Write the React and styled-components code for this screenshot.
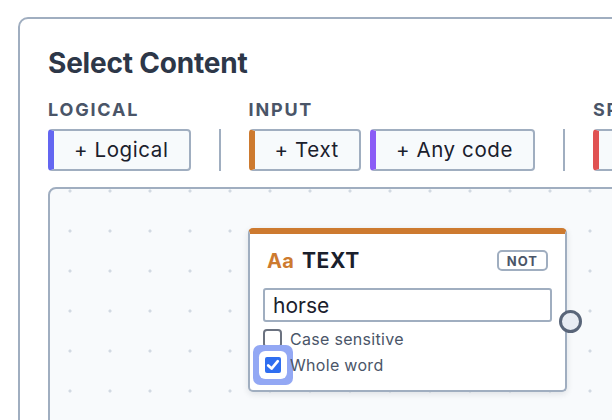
import React from "react";
import styled, { createGlobalStyle } from "styled-components";

const Global = createGlobalStyle`
  html, body { margin: 0; padding: 0; background: #ffffff; overflow: hidden; }
  body { font-family: Inter, "Noto Sans", sans-serif; -webkit-font-smoothing: antialiased; }
  * { box-sizing: border-box; }
`;

const Page = styled.div`
  width: 612px;
  height: 420px;
  overflow: hidden;
  padding: 17px 0 0 18px;
`;

const Panel = styled.div`
  width: 720px;
  height: 460px;
  border: 2px solid #a0aec0;
  border-radius: 10px;
  padding: 27px 0 0 28px;
  background: #ffffff;
`;

const Title = styled.h1`
  margin: 0;
  font-size: 28px;
  line-height: 35px;
  font-weight: 700;
  color: #2d3748;
  letter-spacing: -0.2px;
`;

const Palette = styled.div`
  display: flex;
  align-items: flex-end;
  gap: 28px;
  margin-top: 18px;
`;

const Group = styled.div`
  display: flex;
  flex-direction: column;
  gap: 7.5px;
`;

const GroupLabel = styled.div`
  font-size: 18px;
  line-height: 22px;
  font-weight: 700;
  letter-spacing: 1.8px;
  color: #4a5568;
`;

const Buttons = styled.div`
  display: flex;
  gap: 9px;
`;

const AddButton = styled.button`
  height: 42px;
  padding: 0 20px;
  border: 2px solid #a0aec0;
  border-left: 6px solid ${(p) => p.$accent};
  border-radius: 4px;
  background: #f7fafc;
  font-family: inherit;
  font-size: 20.5px;
  letter-spacing: 0.6px;
  color: #1a202c;
  white-space: nowrap;
`;

const Divider = styled.div`
  width: 2px;
  height: 42px;
  background: #a0aec0;
  flex: none;
`;

const Canvas = styled.div`
  position: relative;
  margin-top: 16px;
  width: 700px;
  height: 300px;
  border: 2px solid #a0aec0;
  border-radius: 8px;
  background-color: #f8fafc;
  background-image: radial-gradient(circle, #d2d9e2 1.2px, transparent 1.9px);
  background-size: 40px 40px;
  background-position: 0px -18px;
`;

const Node = styled.div`
  position: absolute;
  left: 198px;
  top: 39px;
  width: 319px;
  height: 164px;
  background: #ffffff;
  border: 2px solid #a0aec0;
  border-top: 6px solid #cd7a2f;
  border-radius: 5px;
  box-shadow: 0 2px 6px rgba(30, 41, 59, 0.12);
  padding: 16px 13px 0 13px;
  display: flex;
  flex-direction: column;
`;

const NodeHeader = styled.div`
  display: flex;
  align-items: center;
  justify-content: space-between;
  padding: 0 4px;
  height: 22px;
`;

const NodeTitle = styled.div`
  display: flex;
  align-items: baseline;
  gap: 8px;
  font-size: 21px;
  font-weight: 700;
  color: #1a202c;
  letter-spacing: 0.6px;
`;

const TypeIcon = styled.span`
  color: #cd7a2f;
  font-size: 20px;
  letter-spacing: 0.2px;
`;

const Badge = styled.span`
  height: 21px;
  padding: 0 8px;
  border: 2px solid #a0aec0;
  border-radius: 5px;
  display: flex;
  align-items: center;
  font-size: 13px;
  font-weight: 700;
  letter-spacing: 1px;
  color: #4a5568;
`;

const TextField = styled.input`
  margin-top: 16.5px;
  height: 34px;
  width: 100%;
  border: 2px solid #a0aec0;
  border-radius: 3px;
  padding: 0 8px;
  font-family: inherit;
  font-size: 21px;
  color: #1a202c;
  outline: none;
  background: #ffffff;
`;

const Options = styled.div`
  margin-top: 7px;
  display: flex;
  flex-direction: column;
  gap: 7px;
`;

const Option = styled.label`
  display: flex;
  align-items: center;
  gap: 8px;
  height: 19px;
  font-size: 16px;
  letter-spacing: 0.3px;
  color: #4a5568;
`;

const Box = styled.span`
  width: 19px;
  height: 19px;
  flex: none;
  display: flex;
  align-items: center;
  justify-content: center;
`;

const EmptyBox = styled.span`
  width: 19px;
  height: 19px;
  border: 2px solid #6b7280;
  border-radius: 4px;
  background: #ffffff;
`;

const CheckedBox = styled.span`
  width: 16px;
  height: 16px;
  border-radius: 2px;
  background: #2f6ef0;
  display: flex;
  align-items: center;
  justify-content: center;
  box-shadow: 0 0 0 6px #ffffff, 0 0 0 12px #93a8f4;
`;

const Port = styled.span`
  position: absolute;
  right: -17px;
  top: 76px;
  width: 23px;
  height: 23px;
  border-radius: 50%;
  border: 3px solid #596579;
  background: #e8ecf3;
`;

function Checkbox({ checked }) {
  return (
    <Box>
      {checked ? (
        <CheckedBox>
          <svg width="16" height="16" viewBox="0 0 16 16">
            <path d="M3.2 8.4 L6.6 11.6 L12.8 4.2" fill="none" stroke="#fff" strokeWidth="2.7" strokeLinecap="round" strokeLinejoin="round" />
          </svg>
        </CheckedBox>
      ) : (
        <EmptyBox />
      )}
    </Box>
  );
}

export default function App() {
  return (
    <>
      <Global />
      <Page>
        <Panel>
          <Title>Select Content</Title>
          <Palette>
            <Group>
              <GroupLabel>LOGICAL</GroupLabel>
              <Buttons>
                <AddButton $accent="#6366f1">+ Logical</AddButton>
              </Buttons>
            </Group>
            <Divider />
            <Group>
              <GroupLabel>INPUT</GroupLabel>
              <Buttons>
                <AddButton $accent="#cd7a2f">+ Text</AddButton>
                <AddButton $accent="#8b5cf6">+ Any code</AddButton>
              </Buttons>
            </Group>
            <Divider />
            <Group>
              <GroupLabel>SPECIAL</GroupLabel>
              <Buttons>
                <AddButton $accent="#e05252">+ Special</AddButton>
              </Buttons>
            </Group>
          </Palette>
          <Canvas>
            <Node>
              <NodeHeader>
                <NodeTitle>
                  <TypeIcon>Aa</TypeIcon>
                  TEXT
                </NodeTitle>
                <Badge>NOT</Badge>
              </NodeHeader>
              <TextField defaultValue="horse" readOnly />
              <Options>
                <Option>
                  <Checkbox checked={false} />
                  Case sensitive
                </Option>
                <Option>
                  <Checkbox checked />
                  Whole word
                </Option>
              </Options>
              <Port />
            </Node>
          </Canvas>
        </Panel>
      </Page>
    </>
  );
}
